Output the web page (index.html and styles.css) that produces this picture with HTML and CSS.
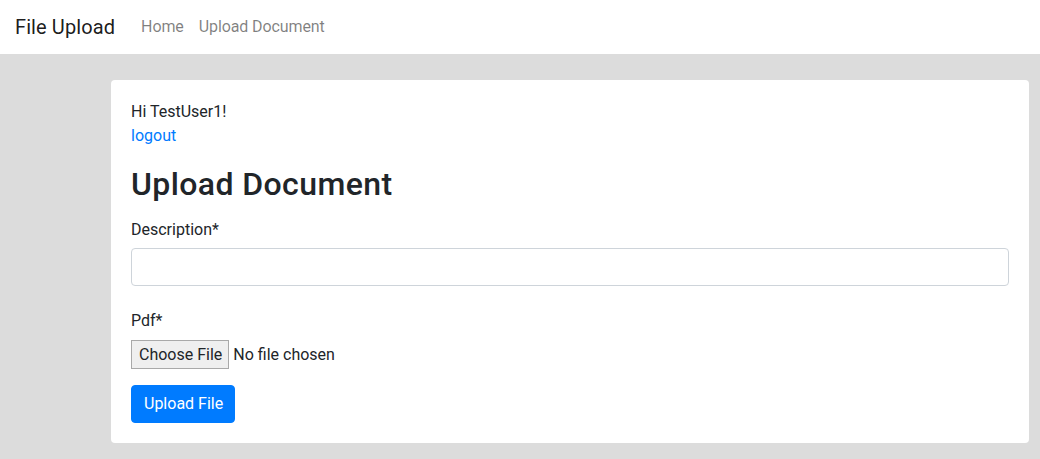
FILE: index.html
```html
<!DOCTYPE html>
<html lang="en">
<head>
<meta charset="utf-8">
<title>File Upload</title>
<link rel="stylesheet" href="styles.css">
</head>
<body>
<nav class="navbar">
  <a class="brand" href="#">File Upload</a>
  <ul class="nav">
    <li><a class="nav-link" href="#">Home</a></li>
    <li><a class="nav-link" href="#">Upload Document</a></li>
  </ul>
</nav>
<main class="main">
  <section class="card">
    <div class="greeting">Hi TestUser1!</div>
    <div><a class="link" href="#">logout</a></div>
    <h2 class="title">Upload Document</h2>
    <form class="form">
      <div class="form-group">
        <label class="label" for="desc">Description*</label>
        <input class="input" id="desc" type="text">
      </div>
      <div class="form-group form-group-file">
        <label class="label label-file">Pdf*</label>
        <div class="file">
          <span class="file-btn">Choose File</span>
          <span class="file-name">No file chosen</span>
        </div>
      </div>
      <button class="btn" type="button">Upload File</button>
    </form>
  </section>
</main>
</body>
</html>
```
FILE: styles.css
```css
* { box-sizing: border-box; }
html, body { margin: 0; padding: 0; }
body {
  font-family: Roboto, "Liberation Sans", Arial, sans-serif;
  font-size: 16px;
  line-height: 24px;
  color: #212529;
  background: #dcdcdc;
  height: 459px;
}
a { text-decoration: none; }
.navbar {
  display: flex;
  align-items: center;
  height: 54px;
  padding: 0 16px 0 15px;
  background: #fff;
}
.brand {
  font-size: 20px;
  line-height: 30px;
  letter-spacing: 0.1px;
  color: rgba(0,0,0,.9);
  margin-right: 18px;
}
.nav {
  display: flex;
  list-style: none;
  margin: 0;
  padding: 0;
}
.nav-link {
  display: block;
  padding: 0 7px 0 8px;
  letter-spacing: -0.1px;
  color: rgba(0,0,0,.5);
}
.main {
  padding: 26px 11px 16px 111px;
}
.card {
  background: #fff;
  border-radius: 4px;
  padding: 20px;
}
.link { color: #007bff; }
.title {
  margin: 17px 0 15px;
  font-size: 32px;
  line-height: 38px;
  font-weight: 500;
  letter-spacing: 0.4px;
}
.form-group { margin-bottom: 16px; }
.label {
  display: block;
  margin-bottom: 6px;
}
.input {
  display: block;
  width: 100%;
  height: 38px;
  border: 1px solid #ced4da;
  border-radius: 4px;
  background: #fff;
  font: inherit;
  padding: 6px 12px;
}
.form-group-file {
  margin-top: 23px;
  margin-bottom: 16px;
}
.label-file { margin-bottom: 7px; }
.file {
  display: flex;
  align-items: center;
  height: 29px;
}
.file-btn {
  display: inline-flex;
  align-items: center;
  height: 29px;
  padding: 0 6px 0 7px;
  background: #efefef;
  border: 1px solid #a9a9a9;
  color: #212529;
}
.file-name { margin-left: 4px; }
.btn {
  display: block;
  height: 38px;
  padding: 0 11px 0 12px;
  border: 1px solid #007bff;
  border-radius: 4px;
  background: #007bff;
  color: #fff;
  font: inherit;
}
```
